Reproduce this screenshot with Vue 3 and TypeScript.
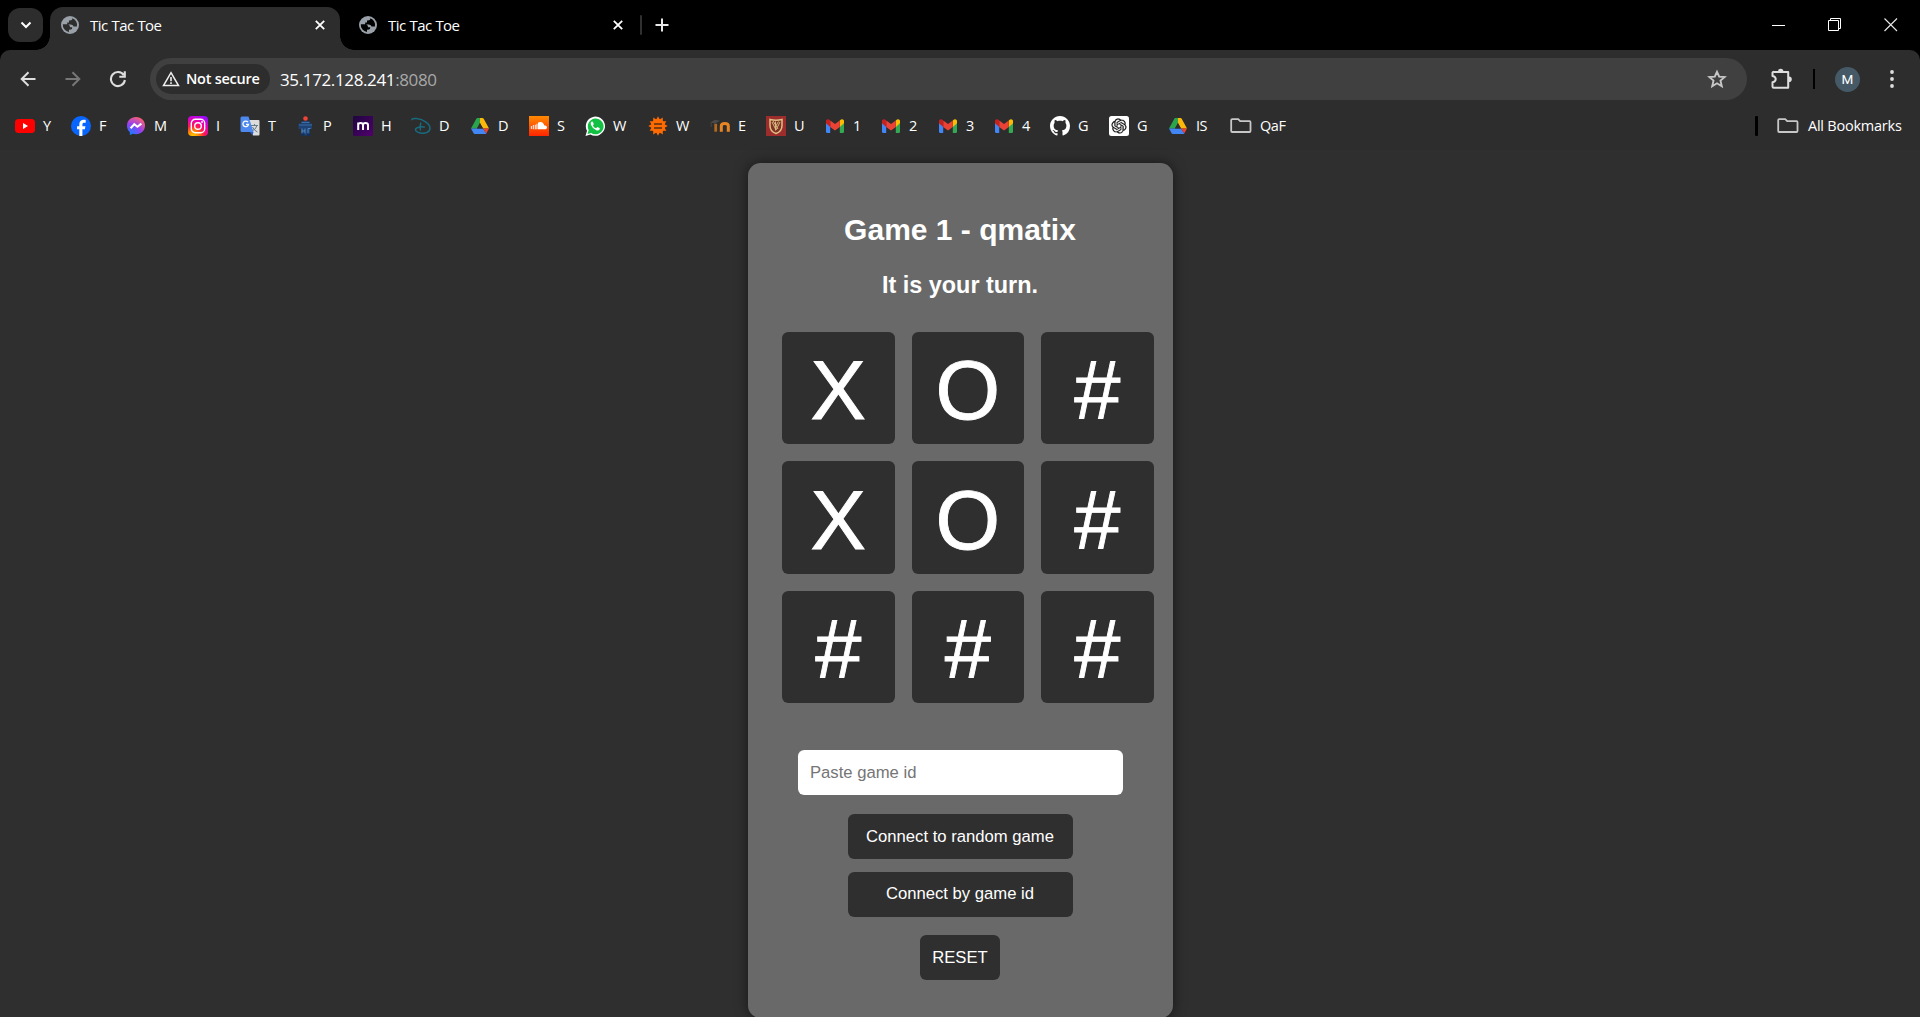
<script setup lang="ts">
import { ref } from 'vue'

interface Bookmark {
  icon: string
  label: string
  width: number
}

const tabs = [
  { title: 'Tic Tac Toe', active: true },
  { title: 'Tic Tac Toe', active: false },
]

const bookmarks: Bookmark[] = [
  { icon: 'youtube', label: 'Y', width: 56 },
  { icon: 'facebook', label: 'F', width: 55 },
  { icon: 'messenger', label: 'M', width: 62 },
  { icon: 'instagram', label: 'I', width: 52 },
  { icon: 'translate', label: 'T', width: 55 },
  { icon: 'robot', label: 'P', width: 58 },
  { icon: 'metro', label: 'H', width: 58 },
  { icon: 'disney', label: 'D', width: 59 },
  { icon: 'drive', label: 'D', width: 59 },
  { icon: 'soundcloud', label: 'S', width: 56 },
  { icon: 'whatsapp', label: 'W', width: 63 },
  { icon: 'gear', label: 'W', width: 62 },
  { icon: 'moodle', label: 'E', width: 56 },
  { icon: 'crest', label: 'U', width: 59 },
  { icon: 'gmail', label: '1', width: 56 },
  { icon: 'gmail', label: '2', width: 57 },
  { icon: 'gmail', label: '3', width: 56 },
  { icon: 'gmail', label: '4', width: 56 },
  { icon: 'github', label: 'G', width: 59 },
  { icon: 'openai', label: 'G', width: 59 },
  { icon: 'drive', label: 'IS', width: 62 },
  { icon: 'folder', label: 'QaF', width: 70 },
]

const teeth = Array.from({ length: 12 }, (_, i) => i * 30)

const board = ref<string[]>(['X', 'O', '#', 'X', 'O', '#', '#', '#', '#'])
const gameId = ref('')
</script>

<template>
  <div class="window">
    <header class="tabstrip">
      <button class="tab-search">
        <svg width="12" height="8" viewBox="0 0 12 8"><path d="M1.5 1.5 6 6l4.500-4.500" fill="none" stroke="#fff" stroke-width="2" /></svg>
      </button>
      <div v-for="(tab, i) in tabs" :key="i" class="tab" :class="{ active: tab.active }">
        <svg class="globe" width="18" height="18" viewBox="0 0 18 18">
          <circle cx="9" cy="9" r="9" fill="#9aa0a8" />
          <path
            d="M1.800 8.200H5.500q3.500 0 3.500 3h2.200q.3 1.700-1.200 2.200l-2 .3v2.300A7.200 7.200 0 0 1 1.800 8.200ZM11.300 2.200q.3 1.600-1.100 2.100l-2.200.2v1.900H6.200v2h3.600q2.700.2 2.700 2.200h3.400A7.200 7.200 0 0 0 11.300 2.200Z"
            :fill="tab.active ? '#2d2d2d' : '#000'"
          />
        </svg>
        <span class="tab-title">{{ tab.title }}</span>
        <svg class="tab-close" width="10" height="10" viewBox="0 0 10 10"><path d="m.8.8 8.400 8.400M9.200.8.8 9.200" stroke="#fff" stroke-width="1.800" /></svg>
      </div>
      <span class="tab-divider"></span>
      <svg class="new-tab" width="14" height="14" viewBox="0 0 14 14"><path d="M7 .5v13M.5 7h13" stroke="#e8e8e8" stroke-width="2" /></svg>
      <div class="controls">
        <svg width="14" height="14" viewBox="0 0 14 14"><path d="M0 7.500h13" stroke="#fff" /></svg>
        <svg width="14" height="14" viewBox="0 0 14 14"><path d="M.5 2.500h10v10H.5zM2.500 2.500v-2h10v10h-2" fill="none" stroke="#fff" /></svg>
        <svg width="14" height="14" viewBox="0 0 14 14"><path d="m.5.5 12.500 12.500M13 .5.5 13" stroke="#e8e8e8" stroke-width="1.100" /></svg>
      </div>
    </header>

    <div class="chrome">
      <div class="toolbar">
        <svg class="nav" width="16" height="16" viewBox="0 0 16 16"><path d="M15.500 8H2M8.500 1.200 1.700 8l6.800 6.800" fill="none" stroke="#dedede" stroke-width="2" /></svg>
        <svg class="nav" width="16" height="16" viewBox="0 0 16 16"><path d="M.5 8H14M7.500 1.200 14.300 8l-6.800 6.800" fill="none" stroke="#777" stroke-width="2" /></svg>
        <svg class="nav" width="18" height="18" viewBox="0 0 18 18"><path d="M14.800 5.200A7 7 0 1 0 15.900 10M15.800 1.200v5.500h-5.500" fill="none" stroke="#dedede" stroke-width="2.100" /></svg>
        <div class="omnibox">
          <div class="chip">
            <svg width="18" height="16" viewBox="0 0 18 16"><path d="M9 1.700 16.500 14.600H1.500Z" fill="none" stroke="#eee" stroke-width="1.500" /><path d="M9 6v4.200M9 11.300v1.700" stroke="#eee" stroke-width="1.600" /></svg>
            <span>Not secure</span>
          </div>
          <span class="url">35.172.128.241<span class="port">:8080</span></span>
          <svg class="star" width="20" height="20" viewBox="0 0 20 20"><path d="M10 2.800 12.200 7.600 17.600 8.100 13.500 11.600 14.800 17.200 10 14.300 5.200 17.200 6.500 11.600 2.400 8.100 7.800 7.600Z" fill="none" stroke="#c7c7c7" stroke-width="1.900" /></svg>
        </div>
        <svg class="puzzle" width="22" height="22" viewBox="0 0 22 22">
          <path d="M3 4h14.200v15.700H2.800a1.300 1.300 0 0 1-1.300-1.300v-4.100c4.300-.8 4.300-5.600 0-6.400V5A1 1 0 0 1 3 4Z" fill="none" stroke="#dedede" stroke-width="2" stroke-linejoin="round" />
          <path d="M7 3.500a2.700 2.700 0 0 1 5.400 0ZM18 8.500a2.800 2.800 0 0 1 0 5.600Z" fill="#dedede" />
        </svg>
        <span class="tool-divider"></span>
        <span class="avatar">M</span>
        <svg class="dots" width="4" height="18" viewBox="0 0 4 18"><circle cx="2" cy="2" r="1.900" fill="#dedede" /><circle cx="2" cy="9" r="1.900" fill="#dedede" /><circle cx="2" cy="16" r="1.900" fill="#dedede" /></svg>
      </div>

      <nav class="bookmarks">
        <div v-for="(b, i) in bookmarks" :key="i" class="bookmark" :class="b.icon" :style="{ width: b.width + 'px' }">
          <svg v-if="b.icon === 'youtube'" width="20" height="20" viewBox="0 0 20 20"><rect y="3" width="20" height="14" rx="3.500" fill="#f00" /><path d="M8 7v6l5-3Z" fill="#fff" /></svg>
          <svg v-else-if="b.icon === 'facebook'" width="20" height="20" viewBox="0 0 20 20"><circle cx="10" cy="10" r="10" fill="#0866ff" /><path d="M8.300 20v-6.800H6v-3h2.300V8.700c0-3.300 1.500-4.900 4.800-4.900.6 0 1.200.1 1.600.2v2.700h-1.400c-1.400 0-1.900.6-1.900 2v1.500h3l-.5 3h-2.500V20Z" fill="#fff" /></svg>
          <svg v-else-if="b.icon === 'messenger'" width="20" height="20" viewBox="0 0 20 20">
            <defs><radialGradient id="msg" cx=".2" cy="1" r="1.100"><stop offset="0" stop-color="#0a84ff" /><stop offset=".55" stop-color="#9440f5" /><stop offset="1" stop-color="#ff6070" /></radialGradient></defs>
            <path d="M10 1C4.800 1 1 4.800 1 9.700c0 2.600 1.100 4.900 2.800 6.400l.1 2.900 3-1.200c1 .3 2 .4 3.100.4 5.200 0 9-3.700 9-8.600S15.200 1 10 1Z" fill="url(#msg)" /><path d="m4.600 12.200 3.700-4 3.100 2.600 4-3.200" fill="none" stroke="#fff" stroke-width="2" />
          </svg>
          <svg v-else-if="b.icon === 'instagram'" width="20" height="20" viewBox="0 0 20 20">
            <defs><radialGradient id="ig" cx=".25" cy="1.050" r="1.150"><stop offset="0" stop-color="#ffd600" /><stop offset=".25" stop-color="#ff8a00" /><stop offset=".5" stop-color="#ff1653" /><stop offset=".75" stop-color="#e600b8" /><stop offset="1" stop-color="#9a0cff" /></radialGradient></defs>
            <rect width="20" height="20" rx="4" fill="url(#ig)" /><rect x="3.300" y="3.300" width="13.400" height="13.400" rx="4" fill="none" stroke="#fff" stroke-width="1.400" /><circle cx="10" cy="10" r="3.300" fill="none" stroke="#fff" stroke-width="1.400" /><circle cx="14" cy="6" r=".9" fill="#fff" />
          </svg>
          <svg v-else-if="b.icon === 'translate'" width="20" height="20" viewBox="0 0 20 20"><path d="M8 4h10.500a1 1 0 0 1 1 1v13.500a1 1 0 0 1-1 1H13Z" fill="#dcdcdc" /><path d="M11 9.500h7M14.500 8v1.500M17 9.500q-1 4-5 5.500M12.500 11q2 4 5 5" stroke="#687b82" fill="none" /><path d="M2 .5h6.500L13.500 16H2a1.500 1.500 0 0 1-1.500-1.500V2A1.500 1.500 0 0 1 2 .5Z" fill="#4d88ef" /><path d="m10 16 3.500 0-1 3.500Z" fill="#315cc0" /><path d="M8 6.200A2.800 2.800 0 1 0 8.500 8.400H6" fill="none" stroke="#fff" stroke-width="1.300" /></svg>
          <svg v-else-if="b.icon === 'robot'" width="20" height="20" viewBox="0 0 20 20"><path d="M6.500 5h8v2.500H17V13h-2v6.500H6V13H3.500V7.500h3Z" fill="#1f4274" /><path d="M4 9h13M6.500 6.500h8" stroke="#3a6ca6" /><path d="M7 12.500v5M10 12.500v5M13 12.500v5M7 15h3M13 12.500h2.500" stroke="#4f86bd" fill="none" /><path d="M6 17.500h3.500V20H6zM12 17.500h3.500V20H12z" fill="#16305c" /><circle cx="10.500" cy="2.500" r="2.300" fill="#f04436" /></svg>
          <svg v-else-if="b.icon === 'metro'" width="20" height="20" viewBox="0 0 20 20"><defs><linearGradient id="mt" x2="1" y2="1"><stop stop-color="#1e063f" /><stop offset="1" stop-color="#51006d" /></linearGradient></defs><rect width="20" height="20" rx="1" fill="url(#mt)" /><path d="M5.200 14V6.500M5.200 9q0-2 2.400-2T10 9v5M10 9q0-2 2.500-2T15 9v5" fill="none" stroke="#fff" stroke-width="2" /></svg>
          <svg v-else-if="b.icon === 'disney'" width="20" height="20" viewBox="0 0 20 20"><path d="M1 4.200C.3 2.800 3 2.300 5.500 2.600 12.500 3.400 19 7.800 19 12.200c0 3.700-4.500 5.800-9.500 4.800-3-.6-5-2-5-3.500 0-2 6.300-3.400 9.300-2.300" fill="none" stroke="#186b7e" stroke-width="1.500" /><path d="M9.800 6.500q-1 4-.4 8" stroke="#186b7e" stroke-width="1.500" fill="none" /></svg>
          <svg v-else-if="b.icon === 'drive'" width="20" height="20" viewBox="0 0 20 20"><path d="M7.500 2h5q.8 0 1.200.8l5.300 9.700h-6L7 2Z" fill="#fbb90b" /><path d="M7.500 2H10v5L6.900 12.500H1L6.300 2.800Q6.700 2 7.500 2Z" fill="#2aa54b" /><path d="M1 12.500h12l3.300 5q-.4.500-1 .5H4.700q-.7 0-1.100-.7Z" fill="#4285f4" /><path d="M13 12.500h6l-2.700 5Z" fill="#e94335" /><path d="m10 7 3 5.500H7Z" fill="#2d2d2d" /></svg>
          <svg v-else-if="b.icon === 'soundcloud'" width="20" height="20" viewBox="0 0 20 20"><defs><linearGradient id="sc" x2="0" y2="1"><stop stop-color="#ff8a00" /><stop offset="1" stop-color="#ff2500" /></linearGradient></defs><rect width="20" height="20" fill="url(#sc)" /><path d="M9 6.500c3-1.600 6 .1 6.300 3.100 1.500-.4 2.700.5 2.700 1.800 0 1.100-.9 1.900-2 1.900H9Z" fill="#fff" /><path d="M2.500 10v3M4.500 9v4.300M6.500 8.700v4.600M8 7.700v5.600" stroke="#ffd9c8" stroke-width="1.300" /></svg>
          <svg v-else-if="b.icon === 'whatsapp'" width="20" height="20" viewBox="0 0 20 20"><path d="M.5 20 2 14.800A9.600 9.600 0 1 1 5.500 18.400Z" fill="#fff" /><path d="m2.500 18 1.200-3.900A7.900 7.900 0 1 1 6.200 16.900Z" fill="#12c143" /><path d="M6.700 5.500q-1.600 1-.8 3.200 1.600 4 5.400 5.500 2.500.8 3.500-1.300l-.2-.8-2.300-1.100-1.300 1.300Q8.500 11.200 7.900 9.400l.9-1.100-.9-2.500Z" fill="#fff" /></svg>
          <svg v-else-if="b.icon === 'gear'" width="20" height="20" viewBox="0 0 20 20"><path v-for="a in teeth" :key="a" d="M8 4 10 .3 12 4Z" fill="#ff6b00" :transform="`rotate(${a} 10 10)`" /><circle cx="10" cy="10" r="7" fill="#ff6b00" /><path d="M6 8h8M6 11.900h8" stroke="#58300f" stroke-width="1.500" /></svg>
          <svg v-else-if="b.icon === 'moodle'" width="20" height="20" viewBox="0 0 20 20"><path d="m0 6.500 5-2.700 5 1-5 2.700Z" fill="#4a4a4a" /><path d="M1.200 7v4" stroke="#494039" stroke-width="1.200" /><path d="M5.700 7.800v7.900" stroke="#b0671f" stroke-width="2.800" /><path d="M11.300 15.700V10q0-2.500 3.500-2.500t3.500 2.500v5.700" fill="none" stroke="#ea8524" stroke-width="3" /></svg>
          <svg v-else-if="b.icon === 'crest'" width="20" height="20" viewBox="0 0 20 20"><rect width="20" height="20" fill="#9d2d2c" /><path d="M4 3.500q6 1.500 12 0v6q0 6-6 8-6-2-6-8Z" fill="#7d3324" stroke="#e0bf84" stroke-width="1.500" /><path d="m6 6 4 8 4-8M7 5l5 8M9.500 5.500v9M12.500 5.500l-3 5" fill="none" stroke="#d8b67d" /></svg>
          <svg v-else-if="b.icon === 'gmail'" width="20" height="20" viewBox="0 0 20 20"><path d="M1 6.500 5.200 9v8H2.300Q1 17 1 15.700Z" fill="#4285f4" /><path d="M19 6.500 14.800 9v8h2.900q1.300 0 1.300-1.300Z" fill="#34a853" /><path d="M14.800 4.500 16 3.600q1.500-1 3 1v2.700L14.800 11Z" fill="#fbbc04" /><path d="M5.200 4.500 10 8l4.800-3.500V11L10 14.500 5.200 11Z" fill="#ea4335" /><path d="M5.200 4.500 4 3.600q-1.500-1-3 1v2.700L5.200 11Z" fill="#c5221f" /></svg>
          <svg v-else-if="b.icon === 'github'" width="20" height="20" viewBox="0 0 16 16"><path fill="#fff" d="M8 0C3.580 0 0 3.580 0 8c0 3.540 2.290 6.530 5.470 7.590.4.070.55-.17.55-.38 0-.19-.01-.82-.01-1.490-2.010.37-2.530-.49-2.690-.94-.09-.23-.48-.94-.82-1.130-.28-.15-.68-.52-.01-.53.63-.01 1.080.58 1.230.82.72 1.210 1.870.87 2.330.66.070-.52.28-.87.51-1.070-1.780-.2-3.640-.89-3.640-3.950 0-.87.31-1.590.82-2.150-.08-.2-.36-1.020.08-2.120 0 0 .67-.21 2.200.82.64-.18 1.320-.27 2-.27s1.360.09 2 .27c1.530-1.040 2.200-.82 2.200-.82.44 1.100.16 1.920.08 2.120.51.56.82 1.270.82 2.150 0 3.070-1.870 3.750-3.650 3.950.29.25.54.73.54 1.480 0 1.070-.01 1.930-.01 2.200 0 .21.15.46.55.38A8.010 8.010 0 0 0 16 8c0-4.420-3.580-8-8-8Z" /></svg>
          <svg v-else-if="b.icon === 'openai'" width="20" height="20" viewBox="0 0 20 20">
            <rect width="20" height="20" rx="2.500" fill="#fff" />
            <path
              transform="translate(2.500 2.500) scale(.625)"
              fill="#111"
              stroke="#111"
              stroke-width=".3"
              d="M22.2819 9.8211a5.9847 5.9847 0 0 0-.5157-4.9108 6.0462 6.0462 0 0 0-6.5098-2.9A6.0651 6.0651 0 0 0 4.9807 4.1818a5.9847 5.9847 0 0 0-3.9977 2.9 6.0462 6.0462 0 0 0 .7427 7.0966 5.98 5.98 0 0 0 .511 4.9107 6.051 6.051 0 0 0 6.5146 2.9001A5.9847 5.9847 0 0 0 13.2599 24a6.0557 6.0557 0 0 0 5.7718-4.2058 5.9894 5.9894 0 0 0 3.9977-2.9001 6.0557 6.0557 0 0 0-.7475-7.0729zm-9.022 12.6081a4.4755 4.4755 0 0 1-2.8764-1.0408l.1419-.0804 4.7783-2.7582a.7948.7948 0 0 0 .3927-.6813v-6.7369l2.02 1.1686a.071.071 0 0 1 .038.052v5.5826a4.504 4.504 0 0 1-4.4945 4.4944zm-9.6607-4.1254a4.4708 4.4708 0 0 1-.5346-3.0137l.142.0852 4.783 2.7582a.7712.7712 0 0 0 .7806 0l5.8428-3.3685v2.3324a.0804.0804 0 0 1-.0332.0615L9.74 19.9502a4.4992 4.4992 0 0 1-6.1408-1.6464zM2.3408 7.8956a4.485 4.485 0 0 1 2.3655-1.9728V11.6a.7664.7664 0 0 0 .3879.6765l5.8144 3.3543-2.0201 1.1685a.0757.0757 0 0 1-.071 0l-4.8303-2.7865A4.504 4.504 0 0 1 2.3408 7.872zm16.5963 3.8558L13.1038 8.364 15.1192 7.2a.0757.0757 0 0 1 .071 0l4.8303 2.7913a4.4944 4.4944 0 0 1-.6765 8.1042v-5.6772a.79.79 0 0 0-.407-.667zm2.0107-3.0231l-.142-.0852-4.7735-2.7818a.7759.7759 0 0 0-.7854 0L9.409 9.2297V6.8974a.0662.0662 0 0 1 .0284-.0615l4.8303-2.7866a4.4992 4.4992 0 0 1 6.6802 4.66zM8.3065 12.863l-2.02-1.1638a.0804.0804 0 0 1-.038-.0567V6.0742a4.4992 4.4992 0 0 1 7.3757-3.4537l-.142.0805L8.704 5.459a.7948.7948 0 0 0-.3927.6813zm1.0976-2.3654l2.602-1.4998 2.6069 1.4998v2.9994l-2.5974 1.4997-2.6067-1.4997Z"
            />
          </svg>
          <svg v-else width="22" height="16" viewBox="0 0 22 16"><path d="M1.200 13V2.200q0-1 1-1h6l2 2h9.300q1 0 1 1V13q0 1-1 1H2.200q-1 0-1-1Z" fill="none" stroke="#c7c7c7" stroke-width="1.800" /></svg>
          <span>{{ b.label }}</span>
        </div>
        <span class="bm-divider"></span>
        <div class="all-bookmarks">
          <svg width="22" height="16" viewBox="0 0 22 16"><path d="M1.200 13V2.200q0-1 1-1h6l2 2h9.300q1 0 1 1V13q0 1-1 1H2.200q-1 0-1-1Z" fill="none" stroke="#c7c7c7" stroke-width="1.800" /></svg>
          <span>All Bookmarks</span>
        </div>
      </nav>
    </div>

    <main class="page">
      <section class="card">
        <h1>Game 1 - qmatix</h1>
        <h2>It is your turn.</h2>
        <div class="board">
          <div v-for="(cell, i) in board" :key="i" class="cell">{{ cell }}</div>
        </div>
        <input v-model="gameId" type="text" placeholder="Paste game id" />
        <button class="connect random">Connect to random game</button>
        <button class="connect">Connect by game id</button>
        <button class="reset">RESET</button>
      </section>
    </main>
  </div>
</template>

<style>
body {
  margin: 0;
  overflow: hidden;
}
</style>

<style scoped>
* {
  box-sizing: border-box;
}
svg {
  display: block;
  flex: none;
}
button {
  border: 0;
  padding: 0;
}
.window {
  width: 1920px;
  height: 1017px;
  display: flex;
  flex-direction: column;
  overflow: hidden;
  background: #000;
  color: #fff;
  font-family: 'Open Sans', 'Noto Sans', sans-serif;
}
.tabstrip {
  height: 50px;
  flex: none;
  display: flex;
  align-items: center;
  padding-left: 8px;
}
.tab-search {
  width: 35px;
  height: 34px;
  border-radius: 12px;
  background: #2d2d2d;
  display: flex;
  align-items: center;
  justify-content: center;
  margin-right: 7px;
}
.tab {
  position: relative;
  width: 297px;
  height: 43px;
  align-self: flex-end;
  display: flex;
  align-items: center;
  padding: 0 11px 7px;
  font-size: 15px;
}
.tab.active {
  width: 290px;
  padding-right: 15px;
  background: #2d2d2d;
  border-radius: 13px 13px 0 0;
}
.tab:not(.active) {
  padding-left: 19px;
  padding-right: 14px;
}
.tab.active::before,
.tab.active::after {
  content: '';
  position: absolute;
  bottom: 0;
  width: 14px;
  height: 14px;
}
.tab.active::before {
  left: -14px;
  background: radial-gradient(circle at 0 0, transparent 13.500px, #2d2d2d 14px);
}
.tab.active::after {
  right: -14px;
  background: radial-gradient(circle at 100% 0, transparent 13.500px, #2d2d2d 14px);
}
.tab-title {
  margin-left: 11px;
  letter-spacing: -0.55px;
  word-spacing: 0.5px;
  white-space: nowrap;
}
.tab-close {
  margin-left: auto;
}
.tab-divider {
  width: 2px;
  height: 20px;
  margin-left: 3px;
  border-radius: 1px;
  background: #303030;
}
.new-tab {
  margin-left: 13px;
}
.controls {
  display: flex;
  gap: 42px;
  margin-left: auto;
  margin-right: 22px;
}
.chrome {
  height: 100px;
  flex: none;
  background: #2d2d2d;
  border-radius: 10px 10px 0 0;
}
.toolbar {
  height: 58px;
  display: flex;
  align-items: center;
  padding-left: 20px;
}
.nav {
  margin-right: 29px;
}
.nav + .nav {
  margin-right: 28px;
}
.nav + .nav + .nav {
  margin-right: 23px;
}
.omnibox {
  width: 1597px;
  height: 42px;
  flex: none;
  border-radius: 21px;
  background: #404040;
  display: flex;
  align-items: center;
  padding: 0 20px 0 6px;
}
.chip {
  width: 114px;
  height: 30px;
  border-radius: 15px;
  background: #2d2d2d;
  display: flex;
  align-items: center;
  padding-left: 6px;
  font-size: 14.500px;
  font-weight: 600;
  letter-spacing: -0.25px;
  white-space: nowrap;
}
.chip span {
  margin-left: 6px;
  padding-bottom: 1px;
}
.url {
  margin-left: 10px;
  font-size: 17px;
  letter-spacing: -0.37px;
}
.port {
  color: #a8a8a8;
}
.star {
  margin-left: auto;
}
.puzzle {
  margin-left: 24px;
}
.tool-divider {
  width: 2px;
  height: 20px;
  margin-left: 20px;
  background: #000;
}
.avatar {
  width: 25px;
  height: 25px;
  margin-left: 20px;
  border-radius: 50%;
  background: #455a66;
  font: 13.500px/25px Roboto, sans-serif;
  text-align: center;
}
.dots {
  margin-left: 30px;
}
.bookmarks {
  height: 36px;
  display: flex;
  align-items: center;
  padding-left: 15px;
  font-size: 14.500px;
}
.bookmark {
  flex: none;
  display: flex;
  align-items: center;
  gap: 8px;
  letter-spacing: -0.45px;
}
.bookmark span,
.all-bookmarks span {
  padding-bottom: 2px;
}
.bm-divider {
  width: 3px;
  height: 20px;
  margin-left: auto;
  background: #000;
  border-radius: 1px;
}
.all-bookmarks {
  display: flex;
  align-items: center;
  gap: 9px;
  width: 143px;
  margin-left: 19px;
  white-space: nowrap;
  letter-spacing: -0.23px;
}
.page {
  flex: 1;
  min-height: 0;
  background: #2f2f2f;
  font-family: 'Liberation Sans', Arial, sans-serif;
  padding-top: 13px;
}
.card {
  width: 425px;
  height: 855px;
  margin: 0 auto 0 748px;
  background: #696969;
  border-radius: 12.500px;
  box-shadow: 0 0 12.500px rgba(0, 0, 0, 0.5);
  display: flex;
  flex-direction: column;
  align-items: center;
  padding: 50px 1px 0 0;
}
h1 {
  margin: 0;
  font-size: 30px;
  line-height: 34px;
}
h2 {
  margin: 25px 0 0;
  font-size: 23.400px;
  line-height: 27px;
}
.board {
  align-self: flex-start;
  display: grid;
  grid-template-columns: repeat(3, 112.500px);
  grid-auto-rows: 112.400px;
  gap: 17px;
  margin: 33px 0 46.800px 34px;
}
.cell {
  display: flex;
  align-items: center;
  justify-content: center;
  background: #2f2f2f;
  border-radius: 6.250px;
  font-size: 83px;
  line-height: 92px;
  padding-top: 6px;
  -webkit-text-stroke: 0.9px #fff;
}
input {
  width: 325px;
  height: 45px;
  flex: none;
  border: 0;
  border-radius: 6.250px;
  padding: 2px 12px 0 12.500px;
  font: 16.667px 'Liberation Sans', Arial, sans-serif;
  color: #000;
  background: #fff;
}
input::placeholder {
  color: #757575;
}
.connect,
.reset {
  flex: none;
  width: 225px;
  height: 45px;
  margin-top: 13px;
  border-radius: 6.250px;
  background: #2f2f2f;
  color: #fff;
  font: 16.667px 'Liberation Sans', Arial, sans-serif;
}
.random {
  margin-top: 19px;
  padding-top: 1px;
}
.reset {
  width: 80px;
  margin-top: 18px;
  padding-top: 1px;
}
</style>
